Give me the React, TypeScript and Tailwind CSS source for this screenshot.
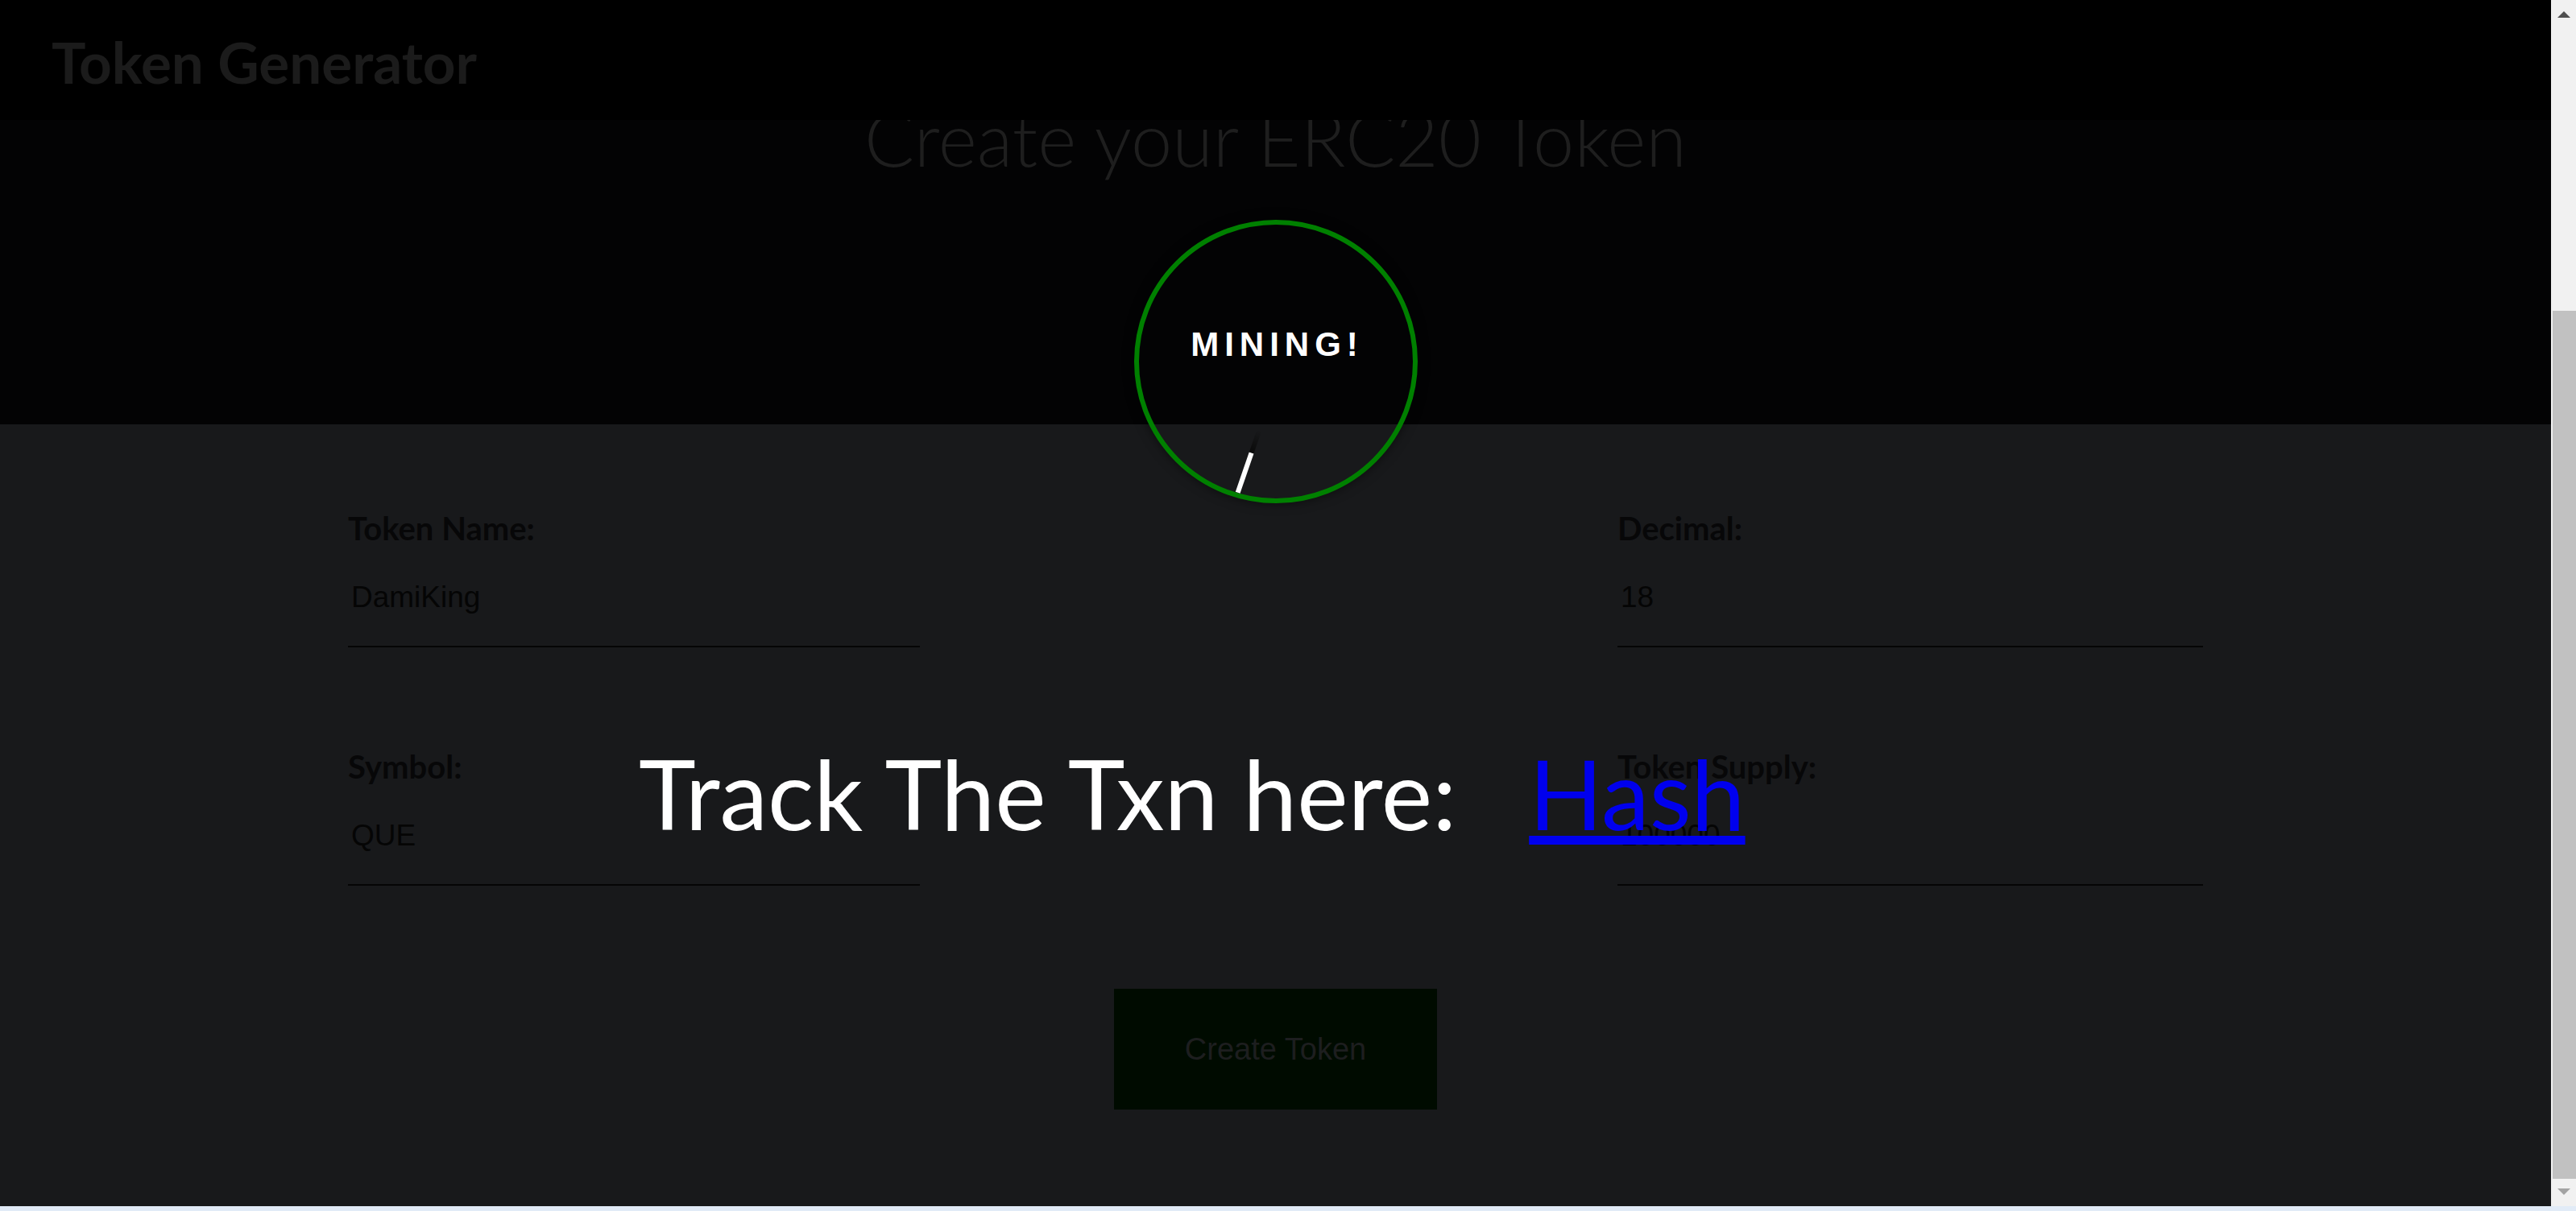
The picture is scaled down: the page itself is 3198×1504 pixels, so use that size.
import React from "react"

const lato = { fontFamily: "Lato, 'Noto Sans', sans-serif" }
const arial = { fontFamily: "'Liberation Sans', Arial, sans-serif" }

interface FieldProps {
  label: string
  value: string
  width: string
}

function Field({ label, value, width }: FieldProps) {
  return (
    <div className={`flex flex-col ${width}`}>
      <label style={lato} className="block text-[40px] leading-none font-bold text-[#070708]">
        {label}
      </label>
      <input
        readOnly
        value={value}
        style={arial}
        className="mt-[10px] h-[118px] w-full bg-transparent pl-[4px] pb-[4px] text-[37px] text-[#050505] border-b-2 border-[#050505] outline-none"
      />
    </div>
  )
}

function Scrollbar() {
  return (
    <div className="flex h-full w-[31px] flex-col bg-[#f1f1f1]">
      <div className="flex h-[36px] items-start justify-center pt-[14px]">
        <div className="h-0 w-0 border-x-[8px] border-b-[8px] border-x-transparent border-b-[#505050]" />
      </div>
      <div className="h-[350px]" />
      <div className="ml-[2px] h-[1078px] bg-[#c1c1c1]" />
      <div className="flex flex-1 items-start justify-center pt-[12px]">
        <div className="h-0 w-0 border-x-[8px] border-t-[8px] border-x-transparent border-t-[#a3a3a3]" />
      </div>
    </div>
  )
}

function MiningModal() {
  return (
    <div className="absolute inset-0 flex flex-col pt-[273px]">
      <div className="relative mx-auto h-[352px] w-[352px] rounded-full border-[6px] border-[#008000] shadow-[0_0_14px_rgba(0,0,0,0.55)]">
        <div style={arial} className="pt-[128px] pl-[4px] text-center text-[42px] leading-none font-bold tracking-[7px] text-white">
          MINING!
        </div>
        <div className="absolute left-[133px] top-[253px] h-[82px] w-[6px] rotate-[19deg] bg-[linear-gradient(to_bottom,rgba(10,10,10,0)_0%,#0a0a0a_36%,#ffffff_37%,#ffffff_100%)]" />
      </div>
      <div style={lato} className="mt-[300px] ml-[793px] flex items-baseline text-[120px] leading-none text-white">
        <span>Track The Txn here:</span>
        <a href="#" className="ml-[90px] text-[#0000ee] underline decoration-[11px] underline-offset-[7px]">
          Hash
        </a>
      </div>
    </div>
  )
}

export default function App() {
  return (
    <div className="flex h-[1504px] w-[3198px] flex-col overflow-hidden bg-[#18191b]">
      <div className="flex h-[1498px]">
        <div className="relative flex w-[3167px] flex-col overflow-hidden">
          <nav className="h-[149px] bg-black pl-[64px] pt-[41px]">
            <h1 style={lato} className="text-[71px] leading-none font-bold text-[#1b1b1b]">
              Token Generator
            </h1>
          </nav>
          <section className="h-[378px] overflow-hidden bg-[#030304]">
            <h2 style={lato} className="-mt-[23px] text-center text-[92px] leading-none font-light text-[#1e1e1e]">
              Create your ERC20 Token
            </h2>
          </section>
          <section className="flex-1 bg-[#18191b] px-[432px] pt-[109px]">
            <div className="flex justify-between">
              <Field label="Token Name:" value="DamiKing" width="w-[710px]" />
              <Field label="Decimal:" value="18" width="w-[727px]" />
            </div>
            <div className="mt-[128px] flex justify-between">
              <Field label="Symbol:" value="QUE" width="w-[710px]" />
              <Field label="Token Supply:" value="100000" width="w-[727px]" />
            </div>
            <div className="mt-[128px] flex justify-center">
              <button style={arial} className="h-[150px] w-[401px] bg-[#000b00] text-[38px] text-[#1d1e1f]">
                Create Token
              </button>
            </div>
          </section>
          <MiningModal />
        </div>
        <Scrollbar />
      </div>
      <div className="h-[6px] bg-[#e1ebf7]" />
    </div>
  )
}
